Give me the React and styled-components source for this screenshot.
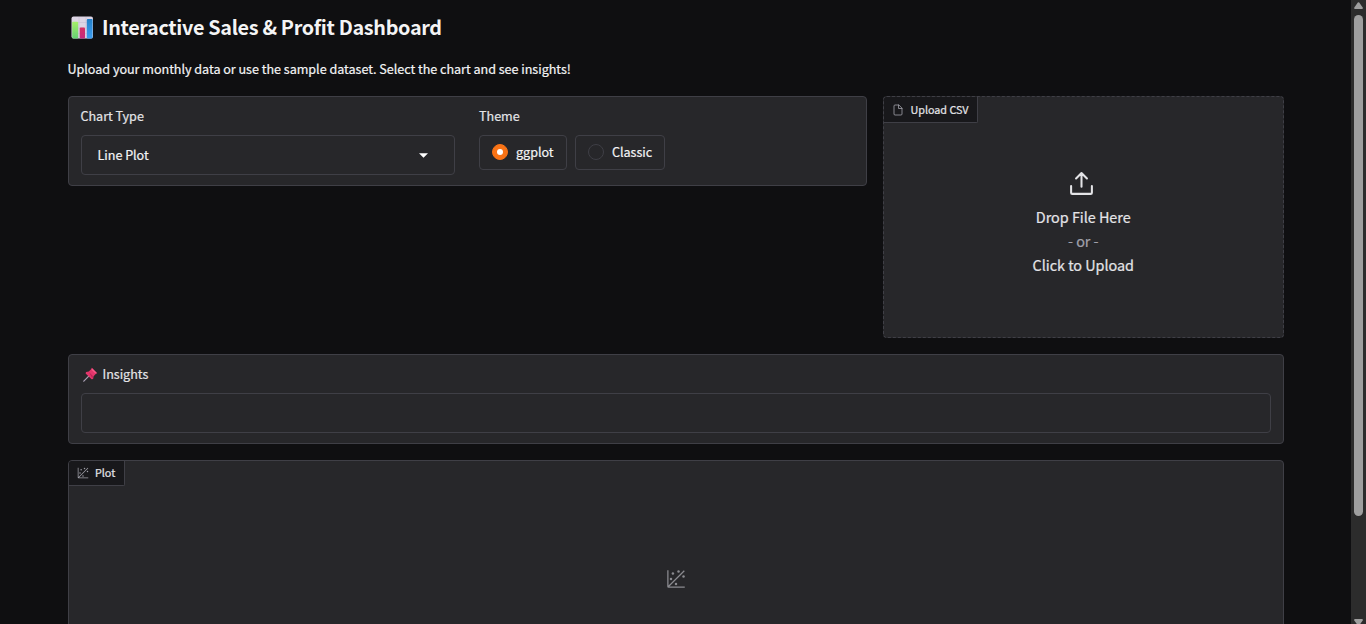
import React from "react";
import styled, { createGlobalStyle } from "styled-components";

const Global = createGlobalStyle`
  *, *::before, *::after { box-sizing: border-box; }
  html, body { margin: 0; height: 100%; overflow: hidden; background: #0f0f11; }
  body { font-family: "Noto Sans CJK SC", "Noto Sans", sans-serif; color: #f4f4f5; }
  svg { display: block; flex: none; }
`;

const Page = styled.div`
  display: flex;
  width: 100%;
  height: 624px;
  overflow: hidden;
`;

const Content = styled.main`
  flex: 1;
  min-width: 0;
  padding: 0 67px 0 68px;
`;

const Text = styled.span`
  display: block;
  white-space: nowrap;
  margin-left: ${(p) => p.$shift ?? -0.5}px;
  font-size: ${(p) => p.$size || 12.6}px;
  line-height: ${(p) => p.$line || 20}px;
  font-weight: ${(p) => p.$weight || 400};
  letter-spacing: ${(p) => p.$track ?? -0.03}px;
  color: ${(p) => p.$color || "#e4e4e7"};
  -webkit-text-stroke: ${(p) => p.$stroke ?? 0.2}px currentColor;
`;

const Title = styled.h1`
  display: flex;
  align-items: center;
  gap: 8px;
  height: 30px;
  margin: 12px 0 17px;
  padding-left: 3px;
`;

const Intro = styled.div`
  height: 37px;
`;

const Row = styled.div`
  display: flex;
  align-items: flex-start;
  gap: 16px;
`;

const Block = styled.section`
  width: ${(p) => p.$width || 1216}px;
  height: ${(p) => p.$height}px;
  margin-bottom: ${(p) => p.$gap || 0}px;
  border: 1px ${(p) => (p.$dashed ? "dashed" : "solid")} #3f3f46;
  border-radius: 4px;
  background: #27272a;
`;

const Form = styled(Block)`
  display: flex;
  gap: 24px;
  padding: 9px 12px;
`;

const Field = styled.div`
  width: ${(p) => p.$width}px;
`;

const Label = styled.div`
  display: flex;
  align-items: center;
  gap: 5px;
  height: 20px;
  margin-bottom: 9px;
  padding-left: ${(p) => p.$inset || 0}px;
`;

const Input = styled.div`
  display: flex;
  align-items: center;
  justify-content: space-between;
  height: 40px;
  padding: 0 26px 0 16px;
  border: 1px solid #3f3f46;
  border-radius: 4px;
`;

const Options = styled.div`
  display: flex;
  gap: 8px;
`;

const Option = styled.div`
  display: flex;
  align-items: center;
  gap: 8px;
  width: ${(p) => p.$width}px;
  height: 35px;
  padding: 0 0 1px 12px;
  border: 1px solid #3f3f46;
  border-radius: 4px;
`;

const Radio = styled.span`
  display: grid;
  place-items: center;
  width: 16px;
  height: 16px;
  border-radius: 50%;
  border: 1px solid ${(p) => (p.$on ? "#f97316" : "#3f3f46")};
  background: ${(p) => (p.$on ? "#f97316" : "#27272a")};
  &::after {
    content: "";
    width: 6px;
    height: 6px;
    border-radius: 50%;
    background: ${(p) => (p.$on ? "#fff" : "transparent")};
  }
`;

const Tag = styled.div`
  display: flex;
  align-items: center;
  gap: 7px;
  width: ${(p) => p.$width}px;
  height: ${(p) => p.$height}px;
  padding-left: 8px;
  border: solid #3f3f46;
  border-width: 0 1px 1px 0;
  border-radius: 3px 0 2px 0;
  background: #18181b;
  color: #a1a1aa;

  ${Text} {
    padding-bottom: ${(p) => p.$lift}px;
  }
`;

const DropArea = styled.div`
  display: flex;
  flex-direction: column;
  align-items: center;
  padding-top: 45px;
`;

const UploadIcon = styled.svg`
  margin: 0 4px 7px 0;
`;

const PlotEmpty = styled.div`
  display: flex;
  justify-content: center;
  padding-top: 83px;
  color: #8b8b90;
`;

const Scrollbar = styled.aside`
  display: flex;
  flex-direction: column;
  align-items: center;
  width: 15px;
  height: 624px;
  padding-top: 2px;
  background: #2c2c2c;
`;

const Thumb = styled.div`
  flex: none;
  width: 9px;
  height: 501px;
  margin: 6px 0 103px;
  border-radius: 5px;
  background: #9f9f9f;
`;

const BarChart = () => (
  <svg width="23" height="23" viewBox="0 0 23 23">
    <defs>
      <linearGradient id="green" x2="0" y2="1"><stop stopColor="#a5ee68" /><stop offset="1" stopColor="#65cf74" /></linearGradient>
      <linearGradient id="blue" x2="0" y2="1"><stop stopColor="#2380c9" /><stop offset="1" stopColor="#3c9df0" /></linearGradient>
      <linearGradient id="pink" x2="0" y2="1"><stop stopColor="#d72f62" /><stop offset="1" stopColor="#c3297e" /></linearGradient>
    </defs>
    <rect x=".5" y=".5" width="21.5" height="22" rx="2" fill="#ddd5e5" />
    <path d="M1 6.5h21M1 12h21M1 17.5h21M8 1v21M15 1v21" stroke="#cabfd5" strokeWidth=".6" />
    <rect x="1.2" y="5.8" width="6" height="16.7" rx="1" fill="url(#green)" />
    <rect x="8.7" y="11.5" width="5.3" height="11" rx="1" fill="url(#pink)" />
    <rect x="15.8" y="3" width="5.8" height="19.5" rx="1" fill="url(#blue)" />
  </svg>
);

const Pin = () => (
  <svg width="15" height="15" viewBox="0 0 15 15">
    <path d="M.8 14.2 6 8.8" stroke="#aaa1b5" strokeWidth="1.2" strokeLinecap="round" />
    <path d="M8.8.8 14.2 6.2 12.7 7 10.6 9.2 10.1 12 8.6 12.3 2.6 6.5 3 5 5.8 4.6 8.1 2.3Z" fill="#e3366b" />
    <path d="M9 1.2 13.9 6l-1.8.3-3.4-3.4Z" fill="#f75b87" />
    <path d="m5.9 5 4 4-.5 2.6Z" fill="#bd2456" />
  </svg>
);

const PlotIcon = ({ size }) => (
  <svg width={size} height={size} viewBox="0 0 32 32" fill="currentColor">
    <circle cx="20" cy="4" r="2" />
    <circle cx="8" cy="16" r="2" />
    <circle cx="28" cy="12" r="2" />
    <circle cx="11" cy="7" r="2" />
    <circle cx="16" cy="24" r="2" />
    <path d="M30 3.413 28.586 2 4 26.585V2H2v26a2 2 0 0 0 2 2h26v-2H5.413Z" />
  </svg>
);

export default function App() {
  return (
    <Page>
      <Global />
      <Content>
        <Title>
          <BarChart />
          <Text $size={19.8} $line={30} $weight={600} $shift={0} $track={-0.32} $stroke={0} $color="#f4f4f5">Interactive Sales &amp; Profit Dashboard</Text>
        </Title>
        <Intro>
          <Text $color="#f4f4f5">Upload your monthly data or use the sample dataset. Select the chart and see insights!</Text>
        </Intro>
        <Row>
          <Form $width={799} $height={90}>
            <Field $width={374}>
              <Label><Text>Chart Type</Text></Label>
              <Input>
                <Text $color="#f4f4f5">Line Plot</Text>
                <svg width="9" height="5" viewBox="0 0 9 5"><path d="M0 .3h9L4.5 4.8Z" fill="#fff" /></svg>
              </Input>
            </Field>
            <Field $width={374}>
              <Label><Text $shift={0}>Theme</Text></Label>
              <Options>
                <Option $width={88}><Radio $on /><Text $shift={0} $color="#f4f4f5">ggplot</Text></Option>
                <Option $width={90}><Radio /><Text $shift={0} $color="#f4f4f5">Classic</Text></Option>
              </Options>
            </Field>
          </Form>
          <Block $width={401} $height={242} $gap={16} $dashed>
            <Tag $width={94} $height={26} $lift={2}>
              <svg width="12" height="12" viewBox="0 0 24 24" fill="none" stroke="currentColor" strokeWidth="1.6" strokeLinecap="round" strokeLinejoin="round">
                <path d="M13 2H6a2 2 0 0 0-2 2v16a2 2 0 0 0 2 2h12a2 2 0 0 0 2-2V9Z" />
                <path d="M13 2v7h7" />
              </svg>
              <Text $size={10.8} $line={18}>Upload CSV</Text>
            </Tag>
            <DropArea>
              <UploadIcon width="29" height="30" viewBox="0 0 24 24" fill="none" stroke="#e4e4e7" strokeWidth="1.7" strokeLinecap="round" strokeLinejoin="round">
                <path d="M3.4 14.5V20a1 1 0 0 0 1 1h15.2a1 1 0 0 0 1-1v-5.5M12 15V3.8M7.5 8.3 12 3.8l4.5 4.5" />
              </UploadIcon>
              <Text $size={14.4} $line={24}>Drop File Here</Text>
              <Text $size={14.4} $line={24} $color="#a1a1aa">- or -</Text>
              <Text $size={14.4} $line={24}>Click to Upload</Text>
            </DropArea>
          </Block>
        </Row>
        <Form $height={90} $gap={16}>
          <Field $width={1190}>
            <Label $inset={1.5}><Pin /><Text $shift={0}>Insights</Text></Label>
            <Input />
          </Field>
        </Form>
        <Block $height={420}>
          <Tag $width={56} $height={25} $lift={2}><PlotIcon size={12} /><Text $size={10.8} $line={18} $shift={-1}>Plot</Text></Tag>
          <PlotEmpty><PlotIcon size={20} /></PlotEmpty>
        </Block>
      </Content>
      <Scrollbar>
        <svg width="9" height="7" viewBox="0 0 9 7"><path d="M3.8.6Q4.5-.2 5.2.6L8.7 5.5Q9.2 6.8 8 7H1Q-.2 6.8.3 5.5Z" fill="#9f9f9f" /></svg>
        <Thumb />
        <svg width="9" height="7" viewBox="0 0 9 7"><path d="M3.8 6.4Q4.5 7.2 5.2 6.4L8.7 1.5Q9.2.2 8 0H1Q-.2.2.3 1.5Z" fill="#9f9f9f" /></svg>
      </Scrollbar>
    </Page>
  );
}
